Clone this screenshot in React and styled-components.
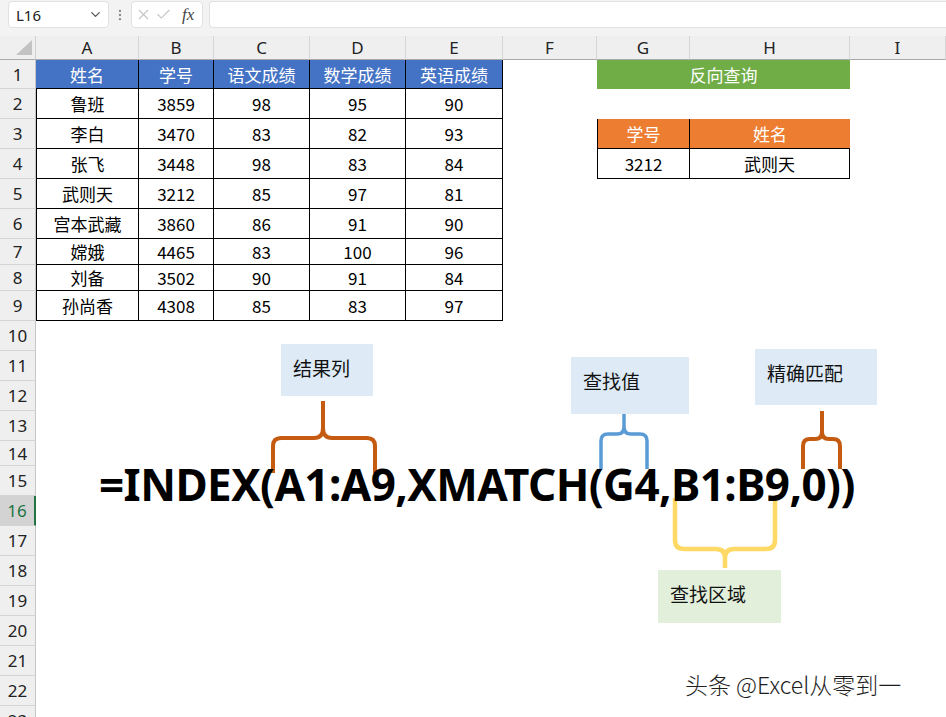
import React from "react";
import styled, { createGlobalStyle } from "styled-components";
import { ChevronDown, EllipsisVertical, X, Check } from "lucide-react";

const GlobalStyle = createGlobalStyle`
  html, body { margin: 0; padding: 0; background: #fff; }
  body { font-family: "Noto Sans", "Noto Sans CJK SC", sans-serif; overflow: hidden; }
`;

const Window = styled.div`
  position: relative;
  width: 946px;
  height: 717px;
  overflow: hidden;
  background: #fff;
`;

/* ---------- formula bar ---------- */

const FormulaBar = styled.div`
  display: flex;
  align-items: flex-start;
  gap: 4px;
  height: 36px;
  padding: 1px 0 0 8px;
  box-sizing: border-box;
  background: #f3f3f3;
`;

const BarBox = styled.div`
  display: flex;
  align-items: center;
  height: 27px;
  box-sizing: border-box;
  background: #fff;
  border: 1px solid #e2e2e2;
  border-radius: 4px;
`;

const NameBox = styled(BarBox)`
  width: 101px;
  justify-content: space-between;
  padding: 0 5px 0 7px;
  font-size: 15px;
  color: #222;
`;

const Grip = styled.div`
  display: flex;
  align-items: center;
  height: 27px;
  color: #8a8a8a;
`;

const FxBox = styled(BarBox)`
  width: 72px;
  gap: 3px;
  padding: 0 0 0 3px;
  color: #c4c4c4;
`;

const Fx = styled.span`
  margin-left: 7px;
  font-family: "Liberation Serif", serif;
  font-style: italic;
  font-size: 17px;
  color: #444;
`;

const InputBox = styled(BarBox)`
  flex: 1;
  margin-left: 2px;
  border-right: none;
  border-radius: 4px 0 0 4px;
`;

/* ---------- sheet grid ---------- */

const ROW_HEIGHTS = [29, 30, 30, 30, 30, 30, 26, 26, 30, 30, 30, 30, 30, 25, 30, 30, 30, 30, 30, 30, 30, 30, 30];
const COLS = ["A", "B", "C", "D", "E", "F", "G", "H", "I"];

const Sheet = styled.div`
  display: grid;
  grid-template-columns: 36px 103px 75px 96px 96px 97px 94px 93px 160px 96px;
  grid-template-rows: 24px ${ROW_HEIGHTS.map((h) => `${h}px`).join(" ")};
`;

const Corner = styled.div`
  display: flex;
  align-items: flex-end;
  justify-content: flex-end;
  padding: 0 3px 4px 0;
  box-sizing: border-box;
  background: #efefef;
  border-bottom: 1px solid #a9a9a9;
  border-right: 1px solid #d0d0d0;
`;

const Triangle = styled.div`
  width: 16px;
  height: 15px;
  background: #c2c2c2;
  clip-path: polygon(100% 0, 100% 100%, 0 100%);
`;

const ColHead = styled.div`
  display: flex;
  align-items: center;
  justify-content: center;
  box-sizing: border-box;
  background: #efefef;
  border-bottom: 1px solid #a9a9a9;
  border-right: 1px solid #d6d6d6;
  font-size: 17px;
  color: #222;
`;

const RowHead = styled.div`
  display: flex;
  align-items: center;
  justify-content: center;
  box-sizing: border-box;
  background: ${(p) => (p.$active ? "#d3d3d3" : "#efefef")};
  color: ${(p) => (p.$active ? "#217346" : "#222")};
  border-right: ${(p) => (p.$active ? "2px solid #217346" : "1px solid #c6c6c6")};
  border-bottom: 1px solid #d4d4d4;
  font-size: 17px;
`;

const FILLS = {
  blue: "#4472c4",
  green: "#70ad47",
  orange: "#ed7d31",
};

const line = (on) => (on ? "1px solid #000" : "none");

const Cell = styled.div`
  display: flex;
  align-items: center;
  justify-content: center;
  box-sizing: border-box;
  grid-column: span ${(p) => p.$span || 1};
  background: ${(p) => FILLS[p.$fill] || "transparent"};
  color: ${(p) => (p.$fill ? "#fff" : "#000")};
  border-left: ${(p) => line(p.$l)};
  border-right: ${(p) => line(p.$r)};
  border-bottom: ${(p) => line(p.$b)};
  font-family: "Noto Sans CJK SC", sans-serif;
  font-size: 17px;
`;

const TABLE = [
  ["姓名", "学号", "语文成绩", "数学成绩", "英语成绩"],
  ["鲁班", "3859", "98", "95", "90"],
  ["李白", "3470", "83", "82", "93"],
  ["张飞", "3448", "98", "83", "84"],
  ["武则天", "3212", "85", "97", "81"],
  ["宫本武藏", "3860", "86", "91", "90"],
  ["嫦娥", "4465", "83", "100", "96"],
  ["刘备", "3502", "90", "91", "84"],
  ["孙尚香", "4308", "85", "83", "97"],
];

function rowCells(r) {
  const cells = [];
  const row = TABLE[r - 1];
  if (row) {
    row.forEach((v, i) => {
      cells.push(
        <Cell key={`t${i}`} $fill={r === 1 ? "blue" : null} $l={i === 0 && r > 1} $r $b>
          {v}
        </Cell>
      );
    });
  } else {
    for (let i = 0; i < 5; i++) cells.push(<Cell key={`t${i}`} />);
  }
  cells.push(<Cell key="F" />);
  if (r === 1) {
    cells.push(<Cell key="GH" $span={2} $fill="green">反向查询</Cell>);
  } else if (r === 3) {
    cells.push(<Cell key="G" $fill="orange" $l $r $b>学号</Cell>);
    cells.push(<Cell key="H" $fill="orange" $b>姓名</Cell>);
  } else if (r === 4) {
    cells.push(<Cell key="G" $l $r $b>3212</Cell>);
    cells.push(<Cell key="H" $r $b>武则天</Cell>);
  } else {
    cells.push(<Cell key="G" />);
    cells.push(<Cell key="H" />);
  }
  cells.push(<Cell key="I" />);
  return cells;
}

/* ---------- floating shapes ---------- */

const Formula = styled.div`
  position: absolute;
  left: 99px;
  top: 462px;
  font-family: "Noto Sans", sans-serif;
  font-weight: 700;
  font-size: 44px;
  letter-spacing: -0.55px;
  line-height: 1;
  color: #000;
  white-space: nowrap;
`;

const Note = styled.div`
  position: absolute;
  left: ${(p) => p.$x}px;
  top: ${(p) => p.$y}px;
  width: ${(p) => p.$w}px;
  height: ${(p) => p.$h}px;
  box-sizing: border-box;
  padding: 12px 0 0 12px;
  background: ${(p) => (p.$green ? "#e2efda" : "#deebf7")};
  font-family: "Noto Sans CJK SC", sans-serif;
  font-size: 19px;
  line-height: 24px;
  color: #111;
`;

const Overlay = styled.svg`
  position: absolute;
  left: 0;
  top: 0;
  pointer-events: none;
`;

const Watermark = styled.div`
  position: absolute;
  left: 685px;
  top: 667px;
  font-family: "Noto Sans CJK SC", sans-serif;
  font-size: 23px;
  font-weight: 300;
  color: #1e1e1e;
  text-shadow: 0 0 2px #fff, 0 0 2px #fff;
  white-space: nowrap;
`;

const BRACES = [
  { color: "#c55a11", w: 4, d: "M273 473 V446 Q273 438 281 438 H314 Q323 438 323 428 V401 M323 428 Q323 438 332 438 H367 Q375 438 375 446 V473" },
  { color: "#5b9bd5", w: 3.5, d: "M601 469 V441 Q601 434 608 434 H617 Q624 434 624 427 V414 M624 427 Q624 434 631 434 H640 Q647 434 647 441 V469" },
  { color: "#c55a11", w: 4, d: "M803 469 V446 Q803 439 810 439 H815 Q822 439 822 432 V411 M822 432 Q822 439 829 439 H833 Q840 439 840 446 V469" },
  { color: "#ffd966", w: 4.5, d: "M675 498 V540 Q675 549 684 549 H716 Q725 549 725 558 V568 M725 558 Q725 549 734 549 H766 Q775 549 775 540 V498" },
];

export default function App() {
  return (
    <Window>
      <GlobalStyle />
      <FormulaBar>
        <NameBox>
          L16
          <ChevronDown size={15} color="#555" />
        </NameBox>
        <Grip>
          <EllipsisVertical size={14} />
        </Grip>
        <FxBox>
          <X size={17} strokeWidth={1.5} />
          <Check size={17} strokeWidth={1.5} />
          <Fx>fx</Fx>
        </FxBox>
        <InputBox />
      </FormulaBar>

      <Sheet>
        <Corner>
          <Triangle />
        </Corner>
        {COLS.map((c) => (
          <ColHead key={c}>{c}</ColHead>
        ))}
        {ROW_HEIGHTS.map((_, i) => (
          <React.Fragment key={i}>
            <RowHead $active={i + 1 === 16}>{i + 1}</RowHead>
            {rowCells(i + 1)}
          </React.Fragment>
        ))}
      </Sheet>

      <Note $x={281} $y={344} $w={92} $h={52}>结果列</Note>
      <Note $x={571} $y={357} $w={118} $h={57}>查找值</Note>
      <Note $x={755} $y={349} $w={122} $h={56}>精确匹配</Note>
      <Note $x={658} $y={570} $w={123} $h={53} $green>查找区域</Note>

      <Overlay width="946" height="717" viewBox="0 0 946 717">
        {BRACES.map((b, i) => (
          <path key={i} d={b.d} fill="none" stroke={b.color} strokeWidth={b.w} strokeLinecap="butt" />
        ))}
      </Overlay>

      <Formula>=INDEX(A1:A9,XMATCH(G4,B1:B9,0))</Formula>

      <Watermark>头条 @Excel从零到一</Watermark>
    </Window>
  );
}
